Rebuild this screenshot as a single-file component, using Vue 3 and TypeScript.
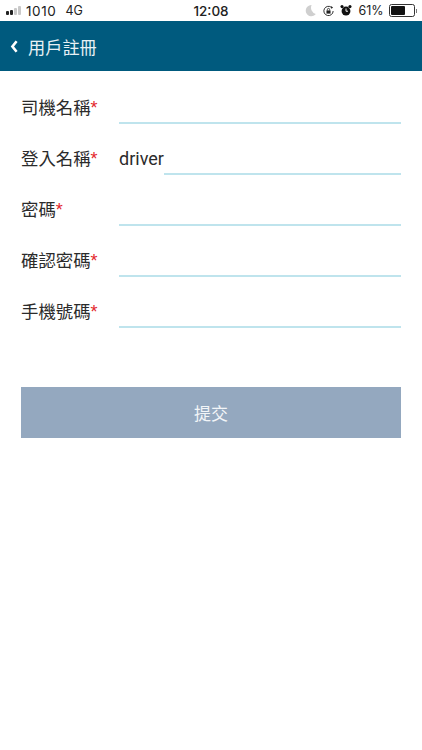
<script setup lang="ts">
interface Field {
  label: string
  value: string
}
const fields: Field[] = [
  { label: '司機名稱', value: '' },
  { label: '登入名稱', value: 'driver' },
  { label: '密碼', value: '' },
  { label: '確認密碼', value: '' },
  { label: '手機號碼', value: '' },
]
</script>

<template>
  <div class="page">
    <div class="status">
      <div class="status-left">
        <span class="signal"><i class="on h1"></i><i class="on h2"></i><i class="h3"></i><i class="h4"></i></span>
        <span class="carrier">1010</span>
        <span class="net">4G</span>
      </div>
      <div class="clock">12:08</div>
      <div class="status-right">
        <svg class="ic" width="14" height="15" viewBox="0 0 14 14"><path d="M8.6 1.6A5.6 5.6 0 1 0 12.8 10.6 6.6 6.6 0 0 1 8.6 1.6Z" fill="#cfcfcf"/></svg>
        <svg class="ic" width="13" height="14" viewBox="0 0 14 14"><path d="M12 7A5 5 0 1 1 10.3 3.2" fill="none" stroke="#222" stroke-width="1"/><path d="M10 1.6 12 3.6 9.6 4.6Z" fill="#222"/><rect x="4.8" y="6.4" width="4.4" height="3.4" fill="#222"/><path d="M5.8 6.4V5.4a1.2 1.2 0 0 1 2.4 0v1" fill="none" stroke="#222" stroke-width=".9"/></svg>
        <svg class="ic" width="12" height="13" viewBox="0 0 13 14"><circle cx="6.5" cy="7.6" r="4.8" fill="#111"/><circle cx="2.2" cy="2.8" r="1.7" fill="#111"/><circle cx="10.8" cy="2.8" r="1.7" fill="#111"/><path d="M6.5 4.8v3h2.2" fill="none" stroke="#fff" stroke-width="1"/></svg>
        <span class="pct">61%</span>
        <span class="battery"><span class="level"></span></span>
        <span class="nub"></span>
      </div>
    </div>

    <header class="nav">
      <svg class="back" width="9" height="13" viewBox="0 0 9 13"><path d="M6.6 1.2 2.4 6.5 6.6 11.8" fill="none" stroke="#fff" stroke-width="2.6"/></svg>
      <span class="title">用戶註冊</span>
    </header>

    <form class="form" @submit.prevent>
      <div v-for="f in fields" :key="f.label" class="row">
        <label class="label">{{ f.label }}<span class="req">*</span></label>
        <span v-if="f.value" class="value">{{ f.value }}</span>
        <span class="line"></span>
      </div>
      <button class="submit" type="submit">提交</button>
    </form>
  </div>
</template>

<style>
html, body { margin: 0; background: #fff; }
</style>

<style scoped>
.page {
  width: 422px;
  height: 750px;
  overflow: hidden;
  background: #fff;
  font-family: "Liberation Sans", "Noto Sans CJK TC", sans-serif;
  color: #2b2b2b;
}
.status {
  height: 21px;
  display: flex;
  align-items: center;
  justify-content: space-between;
  padding: 0 5px 0 6px;
  position: relative;
  font-family: Inter, "Liberation Sans", sans-serif;
  font-size: 12.5px;
  color: #222;
}
.status-left { display: flex; align-items: center; width: 130px; }
.signal { display: flex; align-items: flex-end; gap: 1px; height: 9px; margin-right: 5px; }
.signal i { width: 3px; background: #c9c9c9; border-radius: 1px; display: block; }
.signal i.on { background: #222; }
.h1 { height: 4px; } .h2 { height: 5px; } .h3 { height: 7px; } .h4 { height: 9px; }
.carrier { font-size: 13.5px; letter-spacing: 0.6px; }
.net { margin-left: 9px; font-size: 12.5px; }
.clock {
  position: absolute;
  left: 0; right: 0;
  text-align: center;
  font-size: 13.5px;
  font-weight: 500;
}
.status-right { display: flex; align-items: center; gap: 5px; }
.pct { margin-left: 1px; font-size: 12.5px; }
.battery {
  width: 22px; height: 9px;
  border: 1px solid #333;
  border-radius: 2.5px;
  padding: 1px;
  display: block;
}
.level { display: block; width: 14px; height: 9px; background: #111; border-radius: 1px; }
.nub { width: 1.5px; height: 4px; background: #777; margin-left: -4px; }
.nav {
  height: 50px;
  background: #005a7e;
  display: flex;
  align-items: center;
  padding-left: 10px;
  color: #fff;
}
.back { margin-right: 9px; }
.title { font-size: 17.2px; color: #e9f1f5; }
.form { padding: 2px 21px 0; }
.row {
  height: 51px;
  display: flex;
  align-items: flex-end;
}
.label {
  font-size: 17.4px;
  line-height: 24px;
  padding-bottom: 4px;
  white-space: nowrap;
  width: 98px;
  flex: none;
}
.req { color: #e3262c; font-size: 18px; }
.value {
  font-family: Roboto, "Liberation Sans", sans-serif;
  font-size: 18px;
  line-height: 24px;
  padding-bottom: 4px;
  box-sizing: border-box;
  width: 45px;
  flex: none;
}
.line {
  flex: 1;
  height: 2px;
  background: #bfe4ed;
}
.submit {
  display: block;
  width: 100%;
  height: 51px;
  margin-top: 59px;
  border: 0;
  background: #94a8bf;
  color: #f2f5f8;
  font-family: inherit;
  font-size: 17px;
  padding: 0;
}
</style>
